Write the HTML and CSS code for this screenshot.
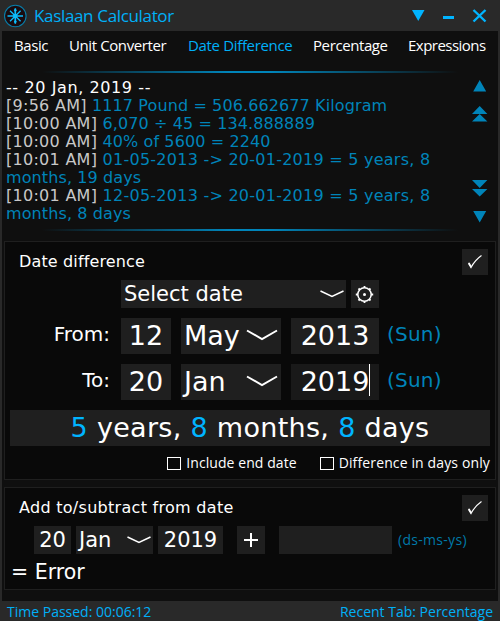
FILE: index.html
```html
<!DOCTYPE html>
<html lang="en">
<head>
<meta charset="utf-8">
<title>Kaslaan Calculator</title>
<link rel="stylesheet" href="styles.css">
</head>
<body>
<div class="window">
  <header class="titlebar">
    <svg class="logo" width="24" height="24" viewBox="0 0 24 24"><circle cx="12.300" cy="12" r="10.800" fill="#1a0c10" stroke="#087da8" stroke-width="1.100"/><g stroke="#0cbcfb"><path d="M12.300 4.500v15M4.500 12h15.500" stroke-width="1.700"/><path d="M7 6.700l10.600 10.600M17.600 6.700L7 17.300" stroke-width="1.300"/></g><circle cx="12.300" cy="12" r="2.200" fill="#0cbcfb"/><path d="M10.800 6.500l1.500-2.500 1.500 2.500-1.500 1.500zM10.800 17.500l1.500-1.500 1.500 1.500-1.500 2.500z" fill="#0cbcfb"/></svg>
    <h1 class="title">Kaslaan Calculator</h1>
    <svg class="controls" width="78" height="16" viewBox="0 0 78 16"><path d="M0 2h12.500L6.250 13z" fill="#00b4ff"/><path d="M31 8h11v3H31z" fill="#00b4ff"/><path d="M61.500 2l12 11.500M73.500 2l-12 11.500" stroke="#00b4ff" stroke-width="2.400"/></svg>
  </header>
  <nav class="tabs">
    <span class="tab t1">Basic</span><span class="tab t2">Unit Converter</span><span class="tab t3 active">Date Difference</span><span class="tab t4">Percentage</span><span class="tab t5">Expressions</span>
  </nav>
  <div class="rule"></div>
  <section class="history">
    <div class="log">
      <div class="day">-- 20 Jan, 2019 --</div>
      <div><b>[9:56 AM]</b> 1117 Pound = 506.662677 Kilogram</div>
      <div><b>[10:00 AM]</b> 6,070 ÷ 45 = 134.888889</div>
      <div><b>[10:00 AM]</b> 40% of 5600 = 2240</div>
      <div><b>[10:01 AM]</b><span class="dates"> 01-05-2013 -&gt; 20-01-2019 = 5 years, 8</span><br>months, 19 days</div>
      <div><b>[10:01 AM]</b><span class="dates"> 12-05-2013 -&gt; 20-01-2019 = 5 years, 8</span><br>months, 8 days</div>
    </div>
    <svg class="scroll" width="16" height="156" viewBox="0 0 16 156"><path d="M1.200 18.500L7.700 7l6.500 11.500zM0 41l7.700-8 7.700 8zM0 48.500l7.700-7.500 7.700 7.500zM0 107h15.400l-7.700 8zM0 116h15.400l-7.700 7.500zM1.200 138h13L7.700 149.500z" fill="#0084b9"/></svg>
  </section>
  <div class="rule"></div>

  <section class="group diff">
    <div class="head"><h2 class="label l1">Date difference</h2><div class="box check"><svg width="16" height="16" viewBox="0 0 16 16"><path d="M1.500 9.500l2.500 4Q8 6 14.500 1.500" fill="none" stroke="#fff" stroke-width="1.200"/><path d="M1 9l1.500-.6L4.300 11.500 4 14z" fill="#fff"/></svg></div></div>
    <div class="row pick">
      <div class="box combo wide"><span class="selecttext">Select date</span><svg width="24" height="8" viewBox="0 0 24 8"><path d="M.5 1L12 6.500 23.500 1" fill="none" stroke="#fff" stroke-width="1.500"/></svg></div>
      <div class="box gear"><svg width="20" height="20" viewBox="0 0 20 20"><circle cx="9.500" cy="10.500" r="6.700" fill="none" stroke="#fff" stroke-width="1.500"/><circle cx="9.500" cy="10.500" r="1.500" fill="#fff"/><path d="M9.500 4V2M9.500 17v2M3 10.500H.8M16 10.500h2.200M5 6L3.500 4.500M14 6l1.500-1.500M5 15l-1.500 1.500M14 15l1.500 1.500" stroke="#fff" stroke-width="1.800"/></svg></div>
    </div>
    <div class="row date">
      <span class="caption">From:</span><div class="box day-field">12</div>
      <div class="box combo month"><span>May</span><svg width="32" height="12" viewBox="0 0 32 12"><path d="M1 1.500l15 8.500 15-8.500" fill="none" stroke="#fff" stroke-width="2"/></svg></div>
      <div class="box year">2013</div><span class="weekday">(Sun)</span>
    </div>
    <div class="row date">
      <span class="caption">To:</span><div class="box day-field">20</div>
      <div class="box combo month"><span>Jan</span><svg width="32" height="12" viewBox="0 0 32 12"><path d="M1 1.500l15 8.500 15-8.500" fill="none" stroke="#fff" stroke-width="2"/></svg></div>
      <div class="box year focused">2019<i class="caret"></i></div><span class="weekday">(Sun)</span>
    </div>
    <div class="box result"><span><em>5</em> years, <em>8</em> months, <em>8</em> days</span></div>
    <div class="options"><span class="tick"></span><span class="opt o1">Include end date</span><span class="tick"></span><span class="opt o2">Difference in days only</span></div>
  </section>

  <section class="group add">
    <div class="head"><h2 class="label l2">Add to/subtract from date</h2><div class="box check"><svg width="16" height="16" viewBox="0 0 16 16"><path d="M1.500 9.500l2.500 4Q8 6 14.500 1.500" fill="none" stroke="#fff" stroke-width="1.200"/><path d="M1 9l1.500-.6L4.300 11.500 4 14z" fill="#fff"/></svg></div></div>
    <div class="row sum">
      <div class="box d">20</div>
      <div class="box combo m"><span>Jan</span><svg width="24" height="8" viewBox="0 0 24 8"><path d="M.5 1L12 6.500 23.500 1" fill="none" stroke="#fff" stroke-width="1.500"/></svg></div>
      <div class="box y">2019</div>
      <div class="box op"><svg width="16" height="16" viewBox="0 0 16 16"><path d="M8 1v14M1 8h14" stroke="#fff" stroke-width="2"/></svg></div>
      <div class="box amount"></div>
      <span class="hint">(ds-ms-ys)</span>
    </div>
    <div class="answer">= Error</div>
  </section>
  <footer class="status"><span class="s1">Time Passed: 00:06:12</span><span class="s2">Recent Tab: Percentage</span></footer>
</div>
</body>
</html>
```
FILE: styles.css
```css
* { box-sizing: border-box; }
body { margin: 0; background: #0f0f0f; }
svg { display: block; flex: none; }
.window { width: 500px; height: 621px; display: flex; flex-direction: column; background: #0f0f0f; border: solid #292929; border-width: 0 2px; font-family: "DejaVu Sans", sans-serif; color: #fff; white-space: nowrap; overflow: hidden; }
.titlebar { height: 31px; margin: 0 -2px; background: #292929; display: flex; align-items: center; padding: 0 10px 0 3px; flex: none; }
.title { margin: 0 auto 0 7px; font: 17px/24px "Open Sans", sans-serif; letter-spacing: -.34px; color: #00b0f8; }
.tabs { display: flex; height: 30px; font: 15px/29px "Open Sans", sans-serif; letter-spacing: -.4px; padding-left: 12px; flex: none; }
.t1 { width: 55px; } .t2 { width: 119px; } .t3 { width: 125px; letter-spacing: -.34px; } .t4 { width: 95px; } .t5 { letter-spacing: -.52px; }
.active { color: #00b0f8; }
.rule { height: 2px; margin: 10px 40px 0; background: linear-gradient(90deg, transparent, #0084b9 45%, #0084b9 55%, transparent); flex: none; }
.history { height: 156px; display: flex; justify-content: space-between; padding: 6px 10px 0 4px; flex: none; }
.history + .rule { margin-top: 0; }
.log { font-size: 16px; line-height: 18px; letter-spacing: .11px; color: #0084b9; }
.log b { font-weight: 400; letter-spacing: .28px; color: #c8c8c8; }
.log .day { letter-spacing: .6px; color: #fff; }
.dates { letter-spacing: .25px; }
.scroll { margin-top: -6px; }
.group { margin: 10px 2px 0; border: 1px solid #1f1f1f; background: #090909; flex: none; }
.diff { height: 239px; }
.add { height: 103px; margin-top: 7px; }
.head { display: flex; justify-content: space-between; padding: 7px 7px 0 14px; height: 33px; }
.label { margin: 0; font-size: 16px; font-weight: 400; line-height: 25px; }
.l1 { letter-spacing: .14px; }
.l2 { letter-spacing: .29px; }
.box { background: #1f1f1f; display: flex; align-items: center; justify-content: center; }
.check { width: 26px; height: 26px; }
.row { display: flex; }
.pick { padding-left: 116px; margin-top: 5px; gap: 5px; height: 28px; }
.combo { justify-content: space-between; }
.wide { width: 225px; font-size: 21px; padding: 0 2px 0 3px; }
.gear { width: 28px; }
.date { height: 36px; margin-top: 10px; font-size: 27px; }
.date .box { padding-bottom: 2px; }
.caption { width: 116px; padding-right: 11px; text-align: right; font-size: 20px; line-height: 32px; }
.day-field { width: 50px; }
.month { width: 100px; margin: 0 10px; padding: 0 3px; }
.year { width: 88px; position: relative; }
.focused { background: #191919; }
.caret { position: absolute; left: 78px; top: 0; width: 1px; height: 32px; background: #fff; }
.weekday { margin-left: 8px; font-size: 20px; line-height: 32px; letter-spacing: .2px; color: #0084b9; }
.result { height: 36px; margin: 10px 5px 0; padding-bottom: 2px; font-size: 27px; letter-spacing: .3px; }
.result em { font-style: normal; color: #00b4ff; }
.options { display: flex; justify-content: flex-end; align-items: center; height: 34px; padding-right: 5px; font: 14px/30px "Open Sans", sans-serif; }
.tick { width: 14px; height: 13px; border: 1px solid #fff; margin-right: 5px; }
.o1 { margin-right: 23px; letter-spacing: .07px; }
.o2 { letter-spacing: .13px; }
.sum { height: 28px; margin-top: 5px; padding-left: 29px; font-size: 21px; }
.sum .box { padding-bottom: 1px; }
.d { width: 37px; } .m { width: 77px; margin: 0 5px; padding: 0 2px 0 3px; } .y { width: 65px; }
.op { width: 28px; margin: 0 14px; } .amount { width: 113px; }
.hint { margin-left: 6px; font: 14px/27px "Open Sans", sans-serif; letter-spacing: .3px; color: #0079a8; }
.answer { font-size: 20.500px; line-height: 36px; padding-left: 6px; }
.status { height: 20px; margin: auto -2px 0; padding: 0 7px; background: #292929; display: flex; justify-content: space-between; font: 14px/21px "Open Sans", sans-serif; color: #00b0f8; flex: none; }
```
